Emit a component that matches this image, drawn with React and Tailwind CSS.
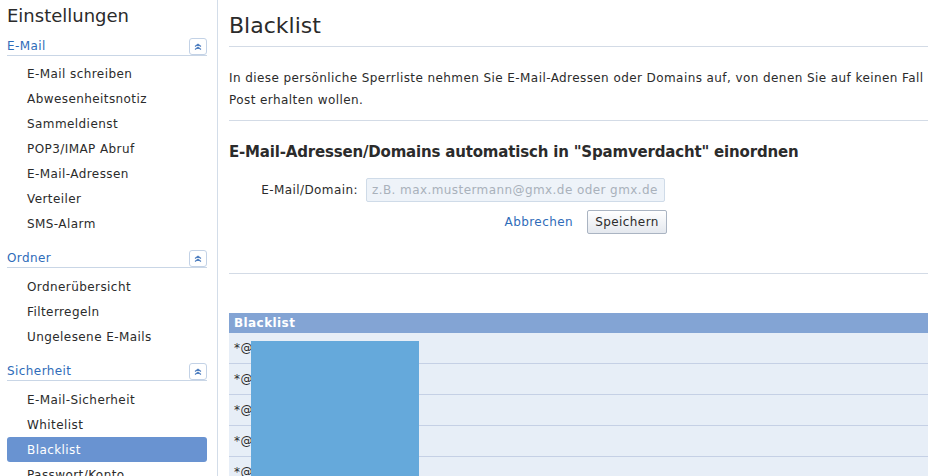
import { useState } from 'react';

// Sidebar navigation groups
const NAV = [
  {
    title: 'E-Mail',
    items: [
      'E-Mail schreiben',
      'Abwesenheitsnotiz',
      'Sammeldienst',
      'POP3/IMAP Abruf',
      'E-Mail-Adressen',
      'Verteiler',
      'SMS-Alarm',
    ],
  },
  {
    title: 'Ordner',
    items: ['Ordnerübersicht', 'Filterregeln', 'Ungelesene E-Mails'],
  },
  {
    title: 'Sicherheit',
    items: ['E-Mail-Sicherheit', 'Whitelist', 'Blacklist', 'Passwort/Konto'],
  },
];

const ROWS = ['*@', '*@', '*@', '*@', '*@'];

function CollapseIcon() {
  return (
    <span className="flex h-[17px] w-[18px] items-center justify-center rounded-[3px] border border-[#c3d2e6] bg-white">
      <svg width="10" height="9" viewBox="0 0 10 9" fill="none">
        <path d="M2 4.5 5 2.2l3 2.3M2 7.5 5 5.2l3 2.3" stroke="#4f7fc0" strokeWidth="1.1" />
      </svg>
    </span>
  );
}

function Sidebar({ active, onSelect }) {
  return (
    <aside className="w-[218px] shrink-0 border-r border-[#d3dde9] pl-[7px] pr-[10px]">
      <h1 className="pt-[3px] text-[18px] leading-[26px] tracking-normal text-[#2b2b2b]">Einstellungen</h1>
      {NAV.map((group, gi) => (
        <div key={group.title} className={gi === 0 ? 'mt-[9px]' : 'mt-[14px]'}>
          <div className="flex h-[18px] items-center justify-between border-b border-[#c9d6e6] pb-px">
            <span className="text-[12px] text-[#2f6cb9]">{group.title}</span>
            <CollapseIcon />
          </div>
          <ul className={gi === 0 ? 'mt-[5px]' : 'mt-[6px]'}>
            {group.items.map((item) => (
              <li
                key={item}
                onClick={() => onSelect(item)}
                className={`flex h-[25px] cursor-pointer items-center rounded-[3px] pl-[20px] text-[12px] ${
                  item === active ? 'bg-[#6993d1] text-white' : 'text-[#2b2b2b]'
                }`}
              >
                {item}
              </li>
            ))}
          </ul>
        </div>
      ))}
    </aside>
  );
}

export default function App() {
  const [active, setActive] = useState('Blacklist');
  const [value, setValue] = useState('');

  return (
    <div className="flex h-[476px] overflow-hidden bg-white font-['DejaVu_Sans',Verdana,sans-serif] tracking-[0.42px] text-[#2b2b2b]">
      <Sidebar active={active} onSelect={setActive} />

      <main className="min-w-0 flex-1 pl-[11px] pr-[16px]">
        <h2 className="border-b border-[#d3dbe6] pt-[12px] pb-[6px] text-[22px] leading-[28px] tracking-normal">Blacklist</h2>

        <p className="border-b border-[#d3dbe6] pt-[20px] pb-[9px] text-[12px] leading-[22px]">
          In diese persönliche Sperrliste nehmen Sie E-Mail-Adressen oder Domains auf, von denen Sie auf keinen Fall Post
          erhalten wollen.
        </p>

        <div className="border-b border-[#d3dbe6] pb-[39px]">
          <h3 className="pt-[20px] text-[15px] font-bold leading-[22px] tracking-[-0.18px]">
            E-Mail-Adressen/Domains automatisch in "Spamverdacht" einordnen
          </h3>
          <div className="mt-[15px] flex items-center">
            <label className="w-[137px] pr-[8px] text-right text-[12px]">E-Mail/Domain:</label>
            <input
              value={value}
              onChange={(e) => setValue(e.target.value)}
              placeholder="z.B. max.mustermann@gmx.de oder gmx.de"
              className="h-[24px] w-[299px] rounded-[2px] border border-[#cfdbe8] bg-[#eef3f9] px-[5px] text-[12px] placeholder:text-[#a9b1bb] outline-none"
            />
          </div>
          <div className="mt-[8px] flex w-[438px] items-center justify-end gap-[14px]">
            <a className="cursor-pointer text-[12px] text-[#2f6cb9]">Abbrechen</a>
            <button className="h-[24px] w-[80px] rounded-[2px] border border-[#aab4c2] bg-gradient-to-b from-white to-[#e4e8ee] text-[12px] text-[#2b2b2b]">
              Speichern
            </button>
          </div>
        </div>

        <div className="mt-[39px]">
          <div className="flex h-[20px] items-center bg-[#83a4d4] pl-[5px] text-[12px] font-bold text-white">Blacklist</div>
          <div className="relative">
            {ROWS.map((r, i) => (
              <div
                key={i}
                className="flex h-[31px] items-center border-b border-[#c5d0e5] bg-[#e7eef7] pl-[5px] text-[12px]"
              >
                {r}
              </div>
            ))}
            <div className="absolute top-[8px] left-[22px] h-[200px] w-[168px] bg-[#65a9db]" />
          </div>
        </div>
      </main>
    </div>
  );
}
